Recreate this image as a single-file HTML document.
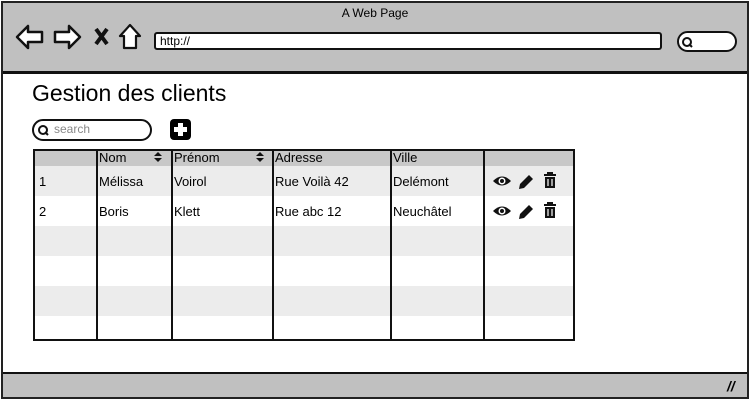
<!DOCTYPE html>
<html><head><style>
*{margin:0;padding:0;box-sizing:border-box}
body{width:750px;height:400px;background:#fff;font-family:"Liberation Sans",sans-serif;position:relative;overflow:hidden;color:#000}
.a{position:absolute}
.cell{position:absolute;font-size:13px}
</style></head><body>
<div class="a" style="left:1px;top:1px;width:748px;height:398px;border:2px solid #222;"></div>
<div class="a" style="left:3px;top:3px;width:744px;height:71px;background:#c0c0c0;border-bottom:3px solid #111"></div>
<div class="a" style="left:0;top:6px;width:750px;text-align:center;font-size:12px">A Web Page</div>
<svg class="a" style="left:14px;top:22px" width="135" height="30" viewBox="0 0 135 30">
<path d="M3 15 L14 4 L14 10 L28 10 L28 20 L14 20 L14 26 Z" fill="#fff" stroke="#111" stroke-width="2.5" stroke-linejoin="round"/>
<path d="M66 15 L55 4 L55 10 L41 10 L41 20 L55 20 L55 26 Z" fill="#fff" stroke="#111" stroke-width="2.5" stroke-linejoin="round"/>
<path d="M82 7 L93 22 M93 7 L82 22" stroke="#111" stroke-width="4"/>
<path d="M116 3 L106 14 L110 14 L110 26 L122 26 L122 14 L126 14 Z" fill="#fff" stroke="#111" stroke-width="2.2" stroke-linejoin="round"/>
</svg>
<div class="a" style="left:154px;top:32px;width:508px;height:18px;background:#fff;border:2px solid #111;border-radius:3px;font-size:12px;padding-left:4px;line-height:14px">http://</div>
<div class="a" style="left:677px;top:31px;width:60px;height:21px;background:#fff;border:2px solid #111;border-radius:11px"></div>
<svg class="a" style="left:681px;top:36px" width="14" height="12"><circle cx="6" cy="6" r="4" fill="none" stroke="#111" stroke-width="2"/><path d="M8 8 L11 11" stroke="#111" stroke-width="2"/></svg>
<div class="a" style="left:3px;top:372px;width:744px;height:25px;background:#c0c0c0;border-top:2px solid #111"></div>
<div class="a" style="left:727px;top:378px;font-size:14px;font-weight:bold;font-style:italic">//</div>
<div class="a" style="left:32px;top:80px;font-size:23px">Gestion des clients</div>
<div class="a" style="left:32px;top:119px;width:120px;height:22px;border:2px solid #111;border-radius:11px"></div>
<svg class="a" style="left:37px;top:124px" width="14" height="13"><circle cx="6" cy="6" r="4" fill="none" stroke="#111" stroke-width="2"/><path d="M8 8 L11 11" stroke="#111" stroke-width="2"/></svg>
<div class="a" style="left:54px;top:122px;font-size:12px;color:#888">search</div>
<div class="a" style="left:170px;top:119px;width:21px;height:21px;background:#000;border-radius:4px"></div>
<div class="a" style="left:178px;top:123px;width:5px;height:13px;background:#fff"></div>
<div class="a" style="left:174px;top:127px;width:13px;height:5px;background:#fff"></div>
<div class="a" style="left:33px;top:149px;width:542px;height:192px;border:2px solid #111;overflow:hidden">
<div class="a" style="left:0;top:0;width:540px;height:15px;background:#c8c8c8"></div>
<div class="a" style="left:0;top:15px;width:540px;height:30px;background:#ececec"></div>
<div class="a" style="left:0;top:75px;width:540px;height:30px;background:#ececec"></div>
<div class="a" style="left:0;top:135px;width:540px;height:30px;background:#ececec"></div>
<div class="a" style="left:61px;top:0;width:2px;height:200px;background:#111"></div>
<div class="a" style="left:136px;top:0;width:2px;height:200px;background:#111"></div>
<div class="a" style="left:237px;top:0;width:2px;height:200px;background:#111"></div>
<div class="a" style="left:355px;top:0;width:2px;height:200px;background:#111"></div>
<div class="a" style="left:448px;top:0;width:2px;height:200px;background:#111"></div>
</div>
<div class="cell" style="left:99px;top:150px">Nom</div>
<div class="cell" style="left:174px;top:150px">Prénom</div>
<div class="cell" style="left:275px;top:150px">Adresse</div>
<div class="cell" style="left:393px;top:150px">Ville</div>
<svg class="a" style="left:153px;top:151px" width="10" height="12"><path d="M1 5 L5 1 L9 5Z M1 7 L5 11 L9 7Z" fill="#111"/></svg>
<svg class="a" style="left:255px;top:151px" width="10" height="12"><path d="M1 5 L5 1 L9 5Z M1 7 L5 11 L9 7Z" fill="#111"/></svg>
<div class="cell" style="left:39px;top:174px">1</div>
<div class="cell" style="left:99px;top:174px">Mélissa</div>
<div class="cell" style="left:174px;top:174px">Voirol</div>
<div class="cell" style="left:275px;top:174px">Rue Voilà 42</div>
<div class="cell" style="left:393px;top:174px">Delémont</div>
<div class="cell" style="left:39px;top:204px">2</div>
<div class="cell" style="left:99px;top:204px">Boris</div>
<div class="cell" style="left:174px;top:204px">Klett</div>
<div class="cell" style="left:275px;top:204px">Rue abc 12</div>
<div class="cell" style="left:393px;top:204px">Neuchâtel</div>
<svg class="a" style="left:492px;top:172px" width="70" height="50">
<g id="r">
<path d="M1 9 Q10 0 19 9 Q10 18 1 9Z" fill="#111"/><circle cx="10" cy="9" r="3.5" fill="#fff"/><circle cx="10" cy="9" r="2" fill="#111"/>
<path d="M27 17 L28 12 L37 3 L41 7 L32 16 Z" fill="#111"/>
<rect x="52" y="2" width="12" height="2" fill="#111"/><rect x="55" y="0" width="6" height="2" fill="#111"/>
<path d="M53 5 H63 V16 H53Z" fill="#111"/><path d="M56 7 V14 M60 7 V14" stroke="#fff" stroke-width="1.2"/>
</g>
<use href="#r" y="30"/>
</svg>
</body></html>
